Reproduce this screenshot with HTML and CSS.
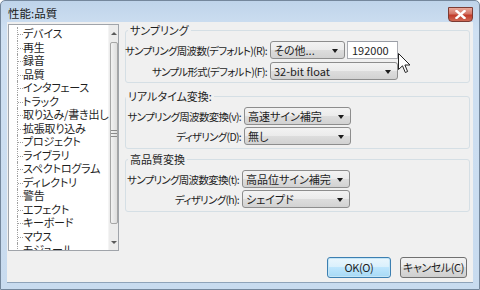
FILE: index.html
```html
<!DOCTYPE html>
<html>
    <head>
        <link rel="stylesheet" href="styles.css">
    </head>
    <body>
        <div class='window'>
            <div class='titlebar'>
                <span class='title'>性能:品質</span>
                <span class='close'>
                    <svg width='11' height='9' viewBox='0 0 11 9'><path d='M1.5 1 L9.5 8 M9.5 1 L1.5 8' stroke='#fff' stroke-width='2.4' stroke-linecap='square'/></svg>
                </span>
            </div>

            <div class='client'>
                <div class='main'>
                    <div class='tree'>
                        <ul class='items'>
                            <li>デバイス</li>
                            <li>再生</li>
                            <li>録音</li>
                            <li>品質</li>
                            <li>インタフェース</li>
                            <li>トラック</li>
                            <li>取り込み/書き出し</li>
                            <li>拡張取り込み</li>
                            <li>プロジェクト</li>
                            <li>ライブラリ</li>
                            <li>スペクトログラム</li>
                            <li>ディレクトリ</li>
                            <li>警告</li>
                            <li>エフェクト</li>
                            <li>キーボード</li>
                            <li>マウス</li>
                            <li>モジュール</li>
                        </ul>
                        <div class='vscroll'>
                            <div class='arrow up'></div>
                            <div class='thumb'><span class='grip'></span></div>
                            <div class='arrow down'></div>
                        </div>
                    </div>

                    <div class='panel'>
                        <fieldset class='group g1'>
                            <legend>サンプリング</legend>
                            <div class='rows'>
                                <label>サンプリング周波数(デフォルト)(R):</label>
                                <div class='pair'>
                                    <span class='combo w75'>その他...</span>
                                    <span class='textbox'>192000</span>
                                </div>
                                <label>サンプル形式(デフォルト)(F):</label>
                                <span class='combo w128'>32-bit float</span>
                            </div>
                        </fieldset>

                        <fieldset class='group g2'>
                            <legend>リアルタイム変換:</legend>
                            <div class='rows'>
                                <label>サンプリング周波数変換(v):</label>
                                <span class='combo w107'>高速サイン補完</span>
                                <label>ディザリング(D):</label>
                                <span class='combo w107'>無し</span>
                            </div>
                        </fieldset>

                        <fieldset class='group g3'>
                            <legend>高品質変換</legend>
                            <div class='rows'>
                                <label>サンプリング周波数変換(t):</label>
                                <span class='combo w108'>高品位サイン補完</span>
                                <label>ディザリング(h):</label>
                                <span class='combo w108'>シェイプド</span>
                            </div>
                        </fieldset>
                    </div>
                </div>

                <div class='buttons'>
                    <span class='btn default'>OK(O)</span>
                    <span class='btn'>キャンセル(C)</span>
                </div>
            </div>

            <svg class='cursor' width='13' height='21' viewBox='0 0 13 21'>
                <path d='M0.5 0.5 L0.5 16.5 L4.5 12.8 L7.3 19.5 L9.6 18.5 L6.9 12 L12 12 Z' fill='#fff' stroke='#222' stroke-width='1'/>
            </svg>
        </div>
    </body>
</html>
```

FILE: styles.css
```css
body {
    margin: 0;
    padding: 0;
    font-family: "Noto Sans CJK JP", "Noto Sans", sans-serif;
    font-size: 11px;
    font-feature-settings: "palt";
    color: #1e1e1e;
}

.window {
    position: relative;
    width: 480px;
    height: 290px;
    box-sizing: border-box;
    border: 1px solid #74879c;
    border-radius: 5px 5px 0 0;
    background: linear-gradient(#bfd4ea, #cfe0f2 30px, #c8dbef);
    display: flex;
    flex-direction: column;
}

.titlebar {
    height: 21px;
    display: flex;
    align-items: center;
    justify-content: space-between;
}
.title {
    padding-left: 7px;
    font-size: 11.5px;
    color: #1b1b1b;
    padding-top: 2px;
}
.close {
    width: 25px;
    height: 15px;
    margin: 5px 6px 0 0;
    box-sizing: border-box;
    border: 1px solid #7c3b33;
    border-radius: 0 0 4px 4px;
    background: linear-gradient(#e9a99b, #d47566 45%, #c13b2a 55%, #cf6a55);
    display: flex;
    align-items: center;
    justify-content: center;
}

.client {
    flex: 1;
    margin: 0 6px 6px 6px;
    background: #f0f0f0;
    border-bottom: 1px solid #8ea3b9;
    display: flex;
    flex-direction: column;
}

.main {
    flex: 1;
    display: flex;
}

/* tree */
.tree {
    width: 111px;
    height: 227px;
    margin: 2px 0 0 1px;
    box-sizing: border-box;
    border: 1px solid #a0a4aa;
    background: #fff;
    display: flex;
    overflow: hidden;
}
.items {
    flex: 1;
    list-style: none;
    margin: 0;
    padding: 2px 0 0 0;
    position: relative;
    letter-spacing: -0.2px;
}
.items li {
    height: 13.5px;
    line-height: 13.5px;
    padding-left: 14px;
    white-space: nowrap;
    position: relative;
}
.items li::before {
    content: '';
    position: absolute;
    left: 8px;
    top: 0;
    height: 100%;
    border-left: 1px dotted #a0a0a0;
}
.items li::after {
    content: '';
    position: absolute;
    left: 9px;
    top: 7px;
    width: 5px;
    border-top: 1px dotted #a0a0a0;
}
.vscroll {
    width: 14px;
    background: #ececec;
    border-left: 1px solid #f4f4f4;
    display: flex;
    flex-direction: column;
}
.arrow {
    height: 16px;
    display: flex;
    align-items: center;
    justify-content: center;
}
.arrow::before {
    content: '';
    border-left: 3px solid transparent;
    border-right: 3px solid transparent;
}
.arrow.up::before { border-bottom: 3px solid #5a5a5a; }
.arrow.down::before { border-top: 3px solid #5a5a5a; }
.thumb {
    flex: 1;
    margin: 1px 1px 10px 1px;
    border: 1px solid #a6a6a6;
    border-radius: 2px;
    background: linear-gradient(90deg, #f2f2f2, #dedede);
    display: flex;
    align-items: center;
    justify-content: center;
}
.grip {
    width: 6px;
    height: 5px;
    border-top: 1px solid #8a8a8a;
    border-bottom: 1px solid #8a8a8a;
    position: relative;
}
.grip::after {
    content: '';
    position: absolute;
    left: 0;
    right: 0;
    top: 2px;
    border-top: 1px solid #8a8a8a;
}

/* right panel */
.panel {
    width: 345px;
    margin: 1px 0 0 6px;
}
.group {
    margin: 0;
    padding: 4px 0 3px 0;
    border: 1px solid #d5dfe5;
    border-radius: 3px;
}
.group legend {
    padding: 0 2px;
    margin-left: 2px;
    line-height: 14px;
}
.g1 { padding-bottom: 2px; }
.g2 { margin-top: 6px; }
.g3 { margin-top: 3px; }
.g2 legend { margin-left: 0; }

.rows {
    display: grid;
    column-gap: 3px;
    row-gap: 2px;
    align-items: center;
}
.g1 .rows { grid-template-columns: 141px auto; row-gap: 3px; }
.g2 .rows { grid-template-columns: 115px auto; }
.g3 .rows { grid-template-columns: 113px auto; }
.rows label {
    display: flex;
    justify-content: flex-end;
    white-space: nowrap;
    font-size: 10.5px;
    letter-spacing: -0.7px;
}

.pair {
    display: flex;
    gap: 2px;
}

.combo {
    position: relative;
    height: 18px;
    box-sizing: border-box;
    border: 1px solid #8d8d8d;
    border-radius: 3px;
    background: linear-gradient(#f3f3f3, #ebebeb 50%, #dddddd 50%, #d2d2d2);
    padding-left: 3px;
    line-height: 16px;
    white-space: nowrap;
    display: block;
}
.combo::after {
    content: '';
    position: absolute;
    right: 6px;
    top: 7px;
    border-left: 3.5px solid transparent;
    border-right: 3.5px solid transparent;
    border-top: 4px solid #1c1c1c;
}
.w75 { width: 75px; }
.w128 { width: 128px; }
.w107 { width: 107px; }
.w108 { width: 108px; }

.textbox {
    width: 51px;
    height: 18px;
    box-sizing: border-box;
    border: 1px solid #abadb3;
    border-top-color: #9a9ea6;
    background: #fff;
    padding-left: 4px;
    line-height: 16px;
}

/* bottom buttons */
.buttons {
    display: flex;
    justify-content: flex-end;
    gap: 9px;
    padding: 0 6px 4px 0;
}
.btn {
    height: 21px;
    box-sizing: border-box;
    border: 1px solid #707070;
    border-radius: 3px;
    background: linear-gradient(#f2f2f2, #ebebeb 50%, #dddddd 50%, #cfcfcf);
    font-size: 11px;
    line-height: 19px;
    text-align: center;
    white-space: nowrap;
    letter-spacing: -0.4px;
    width: 67px;
}
.btn.default {
    width: 64px;
    border-color: #3c7fb1;
    background: linear-gradient(#eaf6fd, #d9f0fc 50%, #bee6fd 50%, #a7d9f5);
    box-shadow: inset 0 0 0 1px #c4e5f6;
}

.cursor {
    position: absolute;
    left: 397px;
    top: 52px;
}
```
